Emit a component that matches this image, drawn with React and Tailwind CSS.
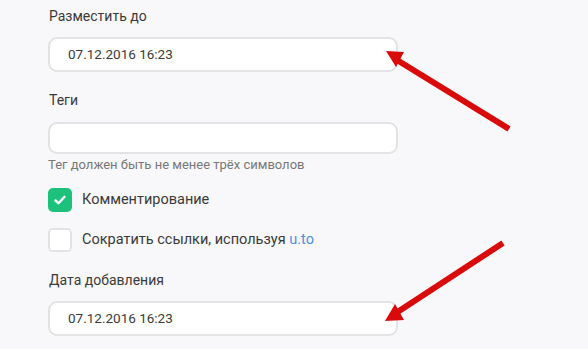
import React from "react";

function Field({ value, h = "h-[35px]" }) {
  return (
    <div className={`w-[350px] ${h} rounded-[9px] border-2 border-[#e3e3e6] bg-white flex items-center pl-[18px] text-[13.5px] text-[#3a3a3a]`}>
      {value}
    </div>
  );
}

export default function App() {
  return (
    <div
      className="relative w-[588px] h-[349px] overflow-hidden bg-[#f8f8fa] text-[#3a3a3a]"
      style={{ fontFamily: 'Roboto, "Noto Sans", sans-serif' }}
    >
      <div className="pl-[48px] pt-[6px] flex flex-col">
        <div className="text-[14px] leading-[20px] pl-[1px]">Разместить до</div>
        <div className="mt-[11px]">
          <Field value="07.12.2016 16:23" />
        </div>
        <div className="mt-[18px] text-[14px] leading-[20px] pl-[1px]">Теги</div>
        <div className="mt-[12px]">
          <Field value="" h="h-[32px]" />
        </div>
        <div className="mt-[3px] text-[13px] leading-[16px] text-[#777]">
          Тег должен быть не менее трёх символов
        </div>
        <div className="mt-[15px] flex items-center gap-[10px]">
          <div className="w-[24px] h-[24px] rounded-[5px] bg-[#1cc27b] flex items-center justify-center">
            <svg width="14" height="14" viewBox="0 0 14 14" fill="none">
              <path d="M2.5 7.5 L5.5 10.2 L11.5 3.8" stroke="white" strokeWidth="2.4" strokeLinecap="round" strokeLinejoin="round" />
            </svg>
          </div>
          <span className="text-[14.5px] leading-[20px]">Комментирование</span>
        </div>
        <div className="mt-[16px] flex items-center gap-[10px]">
          <div className="w-[24px] h-[24px] rounded-[5px] bg-white border-2 border-[#e3e3e6]" />
          <span className="text-[14.5px] leading-[20px]">
            Сократить ссылки, используя <span className="text-[#4a8fe7]">u.to</span>
          </span>
        </div>
        <div className="mt-[18px] text-[14px] leading-[20px] pl-[1px]">Дата добавления</div>
        <div className="mt-[11px]">
          <Field value="07.12.2016 16:23" />
        </div>
      </div>

      <svg className="absolute inset-0 pointer-events-none" width="588" height="349" viewBox="0 0 588 349">
        <line x1="509" y1="129" x2="397" y2="60" stroke="#d90a0a" strokeWidth="6" />
        <polygon points="386,51 404,52 396,67" fill="#d90a0a" />
        <line x1="503" y1="243" x2="396" y2="313" stroke="#d90a0a" strokeWidth="6" />
        <polygon points="385,321 395,304 404,320" fill="#d90a0a" />
      </svg>
    </div>
  );
}
